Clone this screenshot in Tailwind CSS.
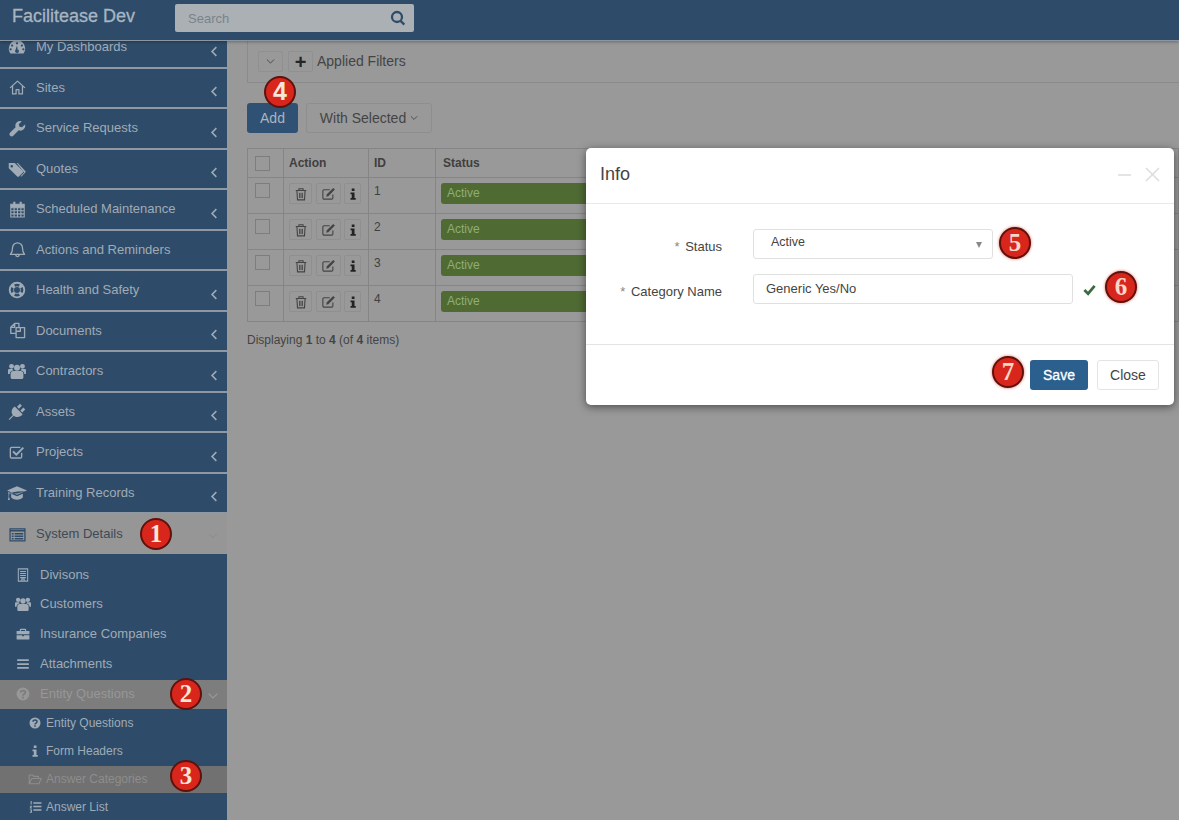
<!DOCTYPE html>
<html lang="en">
<head>
  <meta charset="UTF-8" />
  <title>Facilitease Dev</title>
  <script src="https://cdn.jsdelivr.net/npm/@tailwindcss/browser@4"></script>
</head>
<body class="relative w-[1179px] h-[820px] overflow-hidden bg-[#999999] text-[#3a3a3a] text-[13px] [font-family:'Liberation_Sans',Arial,sans-serif]">

  <!-- icons -->
  <svg class="hidden">
    <symbol id="i-gauge" viewBox="0 0 24 24"><path fill="currentColor" fill-rule="evenodd" d="M12 3a11 11 0 0 0-11 11c0 2.500.8 4.700 2.200 6.500h17.600A11 11 0 0 0 23 14 11 11 0 0 0 12 3zM12 5.500a1.500 1.500 0 1 1 0 3 1.500 1.500 0 0 1 0-3zM5.500 8.500a1.500 1.500 0 1 1 0 3 1.500 1.500 0 0 1 0-3zM18.500 8.500a1.500 1.500 0 1 1 0 3 1.500 1.500 0 0 1 0-3zM3.500 13.500a1.500 1.500 0 1 1 0 3 1.500 1.500 0 0 1 0-3zM20.500 13.500a1.500 1.500 0 1 1 0 3 1.500 1.500 0 0 1 0-3zM12 15a2.500 2.500 0 1 1-2 1l2-6 1 6z"/></symbol>
    <symbol id="i-home" viewBox="0 0 24 24"><path fill="none" stroke="currentColor" stroke-width="1.800" stroke-linejoin="round" d="M1.500 12.500 12 3l10.500 9.500M5 10v11h5v-6h4v6h5V10"/></symbol>
    <symbol id="i-wrench" viewBox="0 0 24 24"><path fill="currentColor" d="M22.600 6.300l-4.200 4.100-3.600-1-1-3.500L18 1.700a6.800 6.800 0 0 0-8.700 8.500L1.700 17.800a3 3 0 0 0 4.300 4.400l7.700-7.600a6.800 6.800 0 0 0 8.900-8.300z"/></symbol>
    <symbol id="i-tags" viewBox="0 0 24 24"><path fill="currentColor" fill-rule="evenodd" d="M1 4h8l11 10.500a1.500 1.500 0 0 1 0 2.200L14.500 22a1.500 1.500 0 0 1-2.200 0L1 11zM5 6.500a1.700 1.700 0 1 0 0 3.400 1.700 1.700 0 0 0 0-3.400z"/><path fill="currentColor" d="M11.500 4h1.500l10 10.500a1.500 1.500 0 0 1 0 2.200L18 22l-1.500-.2 5-5.200z"/></symbol>
    <symbol id="i-calendar" viewBox="0 0 24 24"><path fill="none" stroke="currentColor" stroke-width="1.500" d="M2.500 4.500h19v18h-19zM2.500 9.500h19M7.200 9.500v13M12 9.500v13M16.800 9.500v13M2.500 13.800h19M2.500 18.200h19"/><path fill="currentColor" d="M6 1h3v6H6zM15 1h3v6h-3zM2.500 4.500h19v5h-19z"/></symbol>
    <symbol id="i-bell" viewBox="0 0 24 24"><path fill="none" stroke="currentColor" stroke-width="1.800" stroke-linejoin="round" d="M12 2.500a7 7 0 0 0-7 7c0 5-1 7.500-3 9.500h20c-2-2-3-4.500-3-9.500a7 7 0 0 0-7-7zM9.500 19.500a2.500 2.500 0 0 0 5 0"/></symbol>
    <symbol id="i-lifering" viewBox="0 0 24 24"><path fill="currentColor" fill-rule="evenodd" d="M12 1a11 11 0 1 0 0 22 11 11 0 0 0 0-22zM12 3.500c1.400 0 2.700.3 3.900 1l-1.600 3a5 5 0 0 0-4.600 0l-1.600-3a8.500 8.500 0 0 1 3.900-1zM12 8a4 4 0 1 1 0 8 4 4 0 0 1 0-8zM4.500 8.100l3 1.600a5 5 0 0 0 0 4.600l-3 1.600a8.500 8.500 0 0 1 0-7.800zM19.500 8.100a8.500 8.500 0 0 1 0 7.800l-3-1.600a5 5 0 0 0 0-4.600zM9.700 16.500a5 5 0 0 0 4.600 0l1.600 3a8.500 8.500 0 0 1-7.800 0z"/></symbol>
    <symbol id="i-files" viewBox="0 0 24 24"><path fill="none" stroke="currentColor" stroke-width="1.900" stroke-linejoin="round" d="M9 16H2.500V7.500L8 2h6v5M8 2v5.500H2.500M10 8h6.500L22 8v14H10zM16 8v5h-5"/></symbol>
    <symbol id="i-users" viewBox="0 0 24 24"><path fill="currentColor" d="M12 3.500a4 4 0 1 1 0 8 4 4 0 0 1 0-8zM4.700 2.500a3.300 3.300 0 1 1 0 6.600 3.300 3.300 0 0 1 0-6.600zM19.300 2.500a3.300 3.300 0 1 1 0 6.600 3.300 3.300 0 0 1 0-6.600zM7 12h10c2 0 3.500 1.500 3.500 4v4.500c0 1.200-1 2-2.200 2H5.700c-1.200 0-2.200-.8-2.200-2V16c0-2.500 1.500-4 3.500-4zM0 10c1-.5 2-.6 3-.6h3a5 5 0 0 0 1.200 2C4.500 11.500 2.500 13 2.300 16H0zM24 10c-1-.5-2-.6-3-.6h-3a5 5 0 0 1-1.200 2c2.700.1 4.700 1.600 4.900 4.600H24z"/></symbol>
    <symbol id="i-plug" viewBox="0 0 24 24"><path fill="currentColor" d="M9 4.500 19.500 15C17 19 11 20 7.500 17L2 22.500 1 21.500 6.500 16C3.500 12.500 5 7 9 4.500zM12 5l4-4 2.500 2.500-4 4zM16.500 10l4-4L23 8.500l-4 4z"/></symbol>
    <symbol id="i-check" viewBox="0 0 24 24"><path fill="none" stroke="currentColor" stroke-width="2" stroke-linejoin="round" d="M19 13v6a2 2 0 0 1-2 2H4a2 2 0 0 1-2-2V7a2 2 0 0 1 2-2h13"/><path fill="none" stroke="currentColor" stroke-width="3" d="M6 11l5 5L21.500 5.500"/></symbol>
    <symbol id="i-cap" viewBox="0 0 24 24"><path fill="currentColor" d="M12 4 0 9l12 5 9.500-4-9 2.500-9.800-.5 9.800-1.700L22 10l2-1zM5 13v4.500c2 2 4.500 2.500 7 2.500s5-.5 7-2.500V13l-7 3zM1.500 10.500l.5 6-1 4h2.500l-1-4 .3-5.500z"/></symbol>
    <symbol id="i-listalt" viewBox="0 0 24 24"><path fill="none" stroke="currentColor" stroke-width="1.800" d="M1.500 4h21v17h-21zM1.500 6.700h21"/><path fill="currentColor" d="M4 10h2.500v2H4zM4 13.500h2.500v2H4zM4 17h2.500v2H4zM8 10h12v2H8zM8 13.500h12v2H8zM8 17h12v2H8z"/></symbol>
    <symbol id="i-building" viewBox="0 0 24 24"><path fill="none" stroke="currentColor" stroke-width="1.800" d="M4 1.500h16v21H4zM7 6h10M7 9.500h10M7 13h10M7 16.500h10M10 22.500V19h4v3.500"/></symbol>
    <symbol id="i-briefcase" viewBox="0 0 24 24"><path fill="currentColor" d="M8 3h8a1.500 1.500 0 0 1 1.500 1.500V7H23v5.500H1V7h5.500V4.500A1.500 1.500 0 0 1 8 3zM8.500 5v2h7V5zM1 14h9.500v2h3v-2H23v6a1.500 1.500 0 0 1-1.500 1.500h-19A1.500 1.500 0 0 1 1 20z"/></symbol>
    <symbol id="i-bars" viewBox="0 0 24 24"><path fill="currentColor" d="M2 4h20v3H2zM2 10.500h20v3H2zM2 17h20v3H2z"/></symbol>
    <symbol id="i-question" viewBox="0 0 24 24"><circle cx="12" cy="12" r="11" fill="currentColor"/><path fill="none" stroke="var(--hole)" stroke-width="3" d="M8 9.500C8 7 10 6 12 6s4 1 4 3.300c0 3-4 2.700-4 5.700"/><path fill="var(--hole)" d="M10.500 16.500h3v3h-3z"/></symbol>
    <symbol id="i-info" viewBox="0 0 24 24"><path fill="currentColor" d="M9.500 1h5.500v5H9.500zM7 9h8v11h2.500v3.500h-10.500V20h2.500v-7.500H7z"/></symbol>
    <symbol id="i-folder" viewBox="0 0 24 24"><path fill="none" stroke="currentColor" stroke-width="1.800" stroke-linejoin="round" d="M2 20V5h6l2 2.500h8V11M2 20l4.500-9H23l-4.500 9z"/></symbol>
    <symbol id="i-listol" viewBox="0 0 24 24"><path fill="currentColor" d="M8 4h15v3H8zM8 10.500h15v3H8zM8 17h15v3H8zM3 2h2v6.500H3zM1.500 10.500h4v1.500l-2 2h2v1.500h-4V14l2-2h-2zM1.500 17.500h4v6h-4V22h2.200v-.8h-1.400v-1.400h1.400V19H1.500z"/></symbol>
    <symbol id="i-trash" viewBox="0 0 24 24"><path fill="none" stroke="currentColor" stroke-width="1.900" d="M3 6h18M8.500 6V3h7v3M5 6l1 16h12l1-16"/><path fill="none" stroke="currentColor" stroke-width="1.500" d="M9.500 10v9M12 10v9M14.500 10v9"/></symbol>
    <symbol id="i-edit" viewBox="0 0 24 24"><path fill="none" stroke="currentColor" stroke-width="1.800" stroke-linejoin="round" d="M19 13.500V19a2 2 0 0 1-2 2H5a2 2 0 0 1-2-2V8a2 2 0 0 1 2-2h9"/><path fill="currentColor" d="M9 13.500 19.500 3l2.700 2.700L11.700 16.200 8.500 17z"/></symbol>
    <symbol id="i-search" viewBox="0 0 24 24"><path fill="none" stroke="currentColor" stroke-width="3.400" d="M10.500 3a7.500 7.500 0 1 0 0 15 7.500 7.500 0 0 0 0-15zM15.500 16l6 6"/></symbol>
    <symbol id="i-left" viewBox="0 0 10 14"><path fill="none" stroke="currentColor" stroke-width="2" d="M8 1.500 2.500 7 8 12.500"/></symbol>
    <symbol id="i-down" viewBox="0 0 14 10"><path fill="none" stroke="currentColor" stroke-width="1.500" d="M1.500 2 7 7.500 12.500 2"/></symbol>
  </svg>

  <!-- top bar -->
  <header class="relative z-10 flex items-start h-[41px] bg-[#2e4c69] border-b border-[#8a97a3] shadow-[0_1px_3px_rgba(0,0,0,0.3)]">
    <div class="w-[175px] pl-3 pt-[3px] text-[18px] leading-[26px] text-[#a9b5c0] [-webkit-text-stroke:0.3px_#a9b5c0]">Facilitease Dev</div>
    <div class="flex items-center justify-between w-[239px] h-[28px] mt-1 px-[13px] pr-2 rounded-[2px] bg-[#abb0b5] text-[#7a838b]">
      <span class="pt-px">Search</span>
      <svg class="size-[16px] text-[#2f4c68]"><use href="#i-search"/></svg>
    </div>
  </header>

  <div class="flex h-[779px]">
    <!-- sidebar -->
    <aside class="w-[227px] shrink-0 h-full overflow-hidden bg-[#8e99a4] text-[13px] leading-[12px] text-[#a0abb6]">
      <div class="-mt-[13px]">
        <a class="flex items-center h-[38.5px] mb-[2px] pl-[8px] pr-[9px] bg-[#2e4c69]"><svg class="size-[18px] mr-[10px]"><use href="#i-gauge"/></svg>My Dashboards<svg class="ml-auto mt-2 w-[8px] h-[11px]"><use href="#i-left"/></svg></a>
        <a class="flex items-center h-[38.5px] mb-[2px] pl-[9px] pr-[9px] bg-[#2e4c69]"><svg class="size-[17px] mr-[10px]"><use href="#i-home"/></svg>Sites<svg class="ml-auto mt-2 w-[8px] h-[11px]"><use href="#i-left"/></svg></a>
        <a class="flex items-center h-[38.5px] mb-[2px] pl-[9px] pr-[9px] bg-[#2e4c69]"><svg class="size-[17px] mr-[10px]"><use href="#i-wrench"/></svg>Service Requests<svg class="ml-auto mt-2 w-[8px] h-[11px]"><use href="#i-left"/></svg></a>
        <a class="flex items-center h-[38.5px] mb-[2px] pl-[8px] pr-[9px] bg-[#2e4c69]"><svg class="size-[18px] mr-[10px]"><use href="#i-tags"/></svg>Quotes<svg class="ml-auto mt-2 w-[8px] h-[11px]"><use href="#i-left"/></svg></a>
        <a class="flex items-center h-[38.5px] mb-[2px] pl-[9px] pr-[9px] bg-[#2e4c69]"><svg class="size-[17px] mr-[10px]"><use href="#i-calendar"/></svg>Scheduled Maintenance<svg class="ml-auto mt-2 w-[8px] h-[11px]"><use href="#i-left"/></svg></a>
        <a class="flex items-center h-[38.5px] mb-[2px] pl-[9px] pr-[9px] bg-[#2e4c69]"><svg class="size-[17px] mr-[10px]"><use href="#i-bell"/></svg>Actions and Reminders</a>
        <a class="flex items-center h-[38.5px] mb-[2px] pl-[8px] pr-[9px] bg-[#2e4c69]"><svg class="size-[18px] mr-[10px]"><use href="#i-lifering"/></svg>Health and Safety<svg class="ml-auto mt-2 w-[8px] h-[11px]"><use href="#i-left"/></svg></a>
        <a class="flex items-center h-[38.5px] mb-[2px] pl-[9px] pr-[9px] bg-[#2e4c69]"><svg class="size-[17px] mr-[10px]"><use href="#i-files"/></svg>Documents<svg class="ml-auto mt-2 w-[8px] h-[11px]"><use href="#i-left"/></svg></a>
        <a class="flex items-center h-[38.5px] mb-[2px] pl-[8px] pr-[9px] bg-[#2e4c69]"><svg class="size-[18px] mr-[10px]"><use href="#i-users"/></svg>Contractors<svg class="ml-auto mt-2 w-[8px] h-[11px]"><use href="#i-left"/></svg></a>
        <a class="flex items-center h-[38.5px] mb-[2px] pl-[8px] pr-[9px] bg-[#2e4c69]"><svg class="size-[18px] mr-[10px]"><use href="#i-plug"/></svg>Assets<svg class="ml-auto mt-2 w-[8px] h-[11px]"><use href="#i-left"/></svg></a>
        <a class="flex items-center h-[38.5px] mb-[2px] pl-[9px] pr-[9px] bg-[#2e4c69]"><svg class="size-[16px] mr-[11px]"><use href="#i-check"/></svg>Projects<svg class="ml-auto mt-2 w-[8px] h-[11px]"><use href="#i-left"/></svg></a>
        <a class="flex items-center h-[38.5px] mb-[2px] pl-[7px] pr-[9px] bg-[#2e4c69]"><svg class="size-[20px] mr-[9px]"><use href="#i-cap"/></svg>Training Records<svg class="ml-auto mt-2 w-[8px] h-[11px]"><use href="#i-left"/></svg></a>
        <a class="flex items-center h-[40px] pl-[9px] pr-[9px] bg-[#969696] text-[#3e4a57]"><svg class="size-[17px] mr-[10px] text-[#2e4c69]"><use href="#i-listalt"/></svg>System Details<svg class="ml-auto mt-1 w-[10px] h-[8px] text-[#8e8e8e]"><use href="#i-down"/></svg></a>

        <div class="pt-[6px] pb-8 bg-[#2e4c69]">
          <a class="flex items-center h-[29.6px] pl-[16px]"><svg class="size-[14px] mr-[10px]"><use href="#i-building"/></svg>Divisons</a>
          <a class="flex items-center h-[29.6px] pl-[15px]"><svg class="size-[16px] mr-[9px]"><use href="#i-users"/></svg>Customers</a>
          <a class="flex items-center h-[29.6px] pl-[16px]"><svg class="size-[14px] mr-[10px]"><use href="#i-briefcase"/></svg>Insurance Companies</a>
          <a class="flex items-center h-[29.6px] pl-[16px]"><svg class="size-[14px] mr-[10px]"><use href="#i-bars"/></svg>Attachments</a>
          <a class="flex items-center h-[29px] mt-[1.200px] pl-[16px] pr-[8px] bg-[#7d7d7d] text-[#979797] [--hole:#7d7d7d]"><svg class="size-[14px] mr-[10px]"><use href="#i-question"/></svg>Entity Questions<svg class="ml-auto mt-1 w-[12px] h-[8px] text-[#999999]"><use href="#i-down"/></svg></a>
          <div class="text-[12px]">
            <a class="flex items-center h-[28px] pl-[29px] [--hole:#2e4c69]"><svg class="size-[12px] mr-[5px]"><use href="#i-question"/></svg>Entity Questions</a>
            <a class="flex items-center h-[28px] pl-[29px]"><svg class="size-[12px] mr-[5px]"><use href="#i-info"/></svg>Form Headers</a>
            <a class="flex items-center h-[27px] mt-[1px] pl-[28px] bg-[#717171] text-[#8d8d8d]"><svg class="size-[14px] mr-[4px]"><use href="#i-folder"/></svg>Answer Categories</a>
            <a class="flex items-center h-[28px] pl-[29px]"><svg class="size-[13px] mr-[4px]"><use href="#i-listol"/></svg>Answer List</a>
          </div>
        </div>
      </div>
    </aside>

    <!-- main content -->
    <main class="flex-1 min-w-0 pl-5">
      <div class="flex items-center h-[42px] pl-[10px] gap-[5px] border-l border-b border-[#8b8b8b]">
        <button class="flex items-center justify-center w-[25px] h-[21px] rounded-[2px] border border-[#909090] text-[#4a4a4a]"><svg class="w-[9px] h-[7px]"><use href="#i-down"/></svg></button>
        <button class="flex items-center justify-center w-[25px] h-[21px] rounded-[2px] border border-[#909090] text-[#262626] text-[20px] font-bold leading-none">+</button>
        <span class="ml-[-1px] text-[14px] text-[#444444]">Applied Filters</span>
      </div>

      <div class="flex gap-2 mt-[20px]">
        <button class="w-[51px] h-[30px] rounded-[3px] bg-[#2f5173] text-[14px] text-[#a9b5c1]">Add</button>
        <button class="flex items-center justify-center gap-1 w-[126px] h-[30px] rounded-[3px] border border-[#8e8e8e] text-[14px] text-[#444444]">With Selected<svg class="w-[8px] h-[6px]"><use href="#i-down"/></svg></button>
      </div>

      <table class="w-full mt-[15px] table-fixed border-collapse text-[12px] text-[#3f3f3f]">
        <colgroup><col class="w-[36px]" /><col class="w-[85px]" /><col class="w-[67px]" /><col class="w-[400px]" /><col /></colgroup>
        <thead>
          <tr class="h-[29px] font-bold text-left">
            <th class="border border-[#858585] align-middle pl-[7px]"><span class="block size-[15px] border border-[#7d7d7d]"></span></th>
            <th class="border border-[#858585] pl-[5px]">Action</th>
            <th class="border border-[#858585] pl-[5px]">ID</th>
            <th class="border border-[#858585] pl-[7px]">Status</th>
            <th class="border border-[#858585]"></th>
          </tr>
        </thead>
        <tbody>
          <tr class="h-[36px]">
            <td class="border border-[#858585] align-top pl-[7px] pt-[5px]"><span class="block size-[15px] border border-[#7d7d7d]"></span></td>
            <td class="border border-[#858585] align-top pl-[5px] pt-[5px]"><div class="flex gap-[3.500px]">
              <span class="flex items-center justify-center w-[23px] h-[21px] rounded-[2px] border border-[#8f8f8f] text-[#444444]"><svg class="size-[14px]"><use href="#i-trash"/></svg></span>
              <span class="flex items-center justify-center w-[25px] h-[21px] rounded-[2px] border border-[#8f8f8f] text-[#444444]"><svg class="size-[15px]"><use href="#i-edit"/></svg></span>
              <span class="flex items-center justify-center w-[17px] h-[21px] rounded-[2px] border border-[#8f8f8f]"><svg class="size-[12px] text-[#222222]"><use href="#i-info"/></svg></span>
            </div></td>
            <td class="border border-[#858585] align-top pl-[5px] pt-[4px]">1</td>
            <td class="border border-[#858585] align-top pl-[5px] pt-[5px]"><div class="flex items-center h-[21px] pl-[6px] pb-[2px] rounded-[3px] bg-[#4f6b33] text-[#8fae72]">Active</div></td>
            <td class="border border-[#858585]"></td>
          </tr>
          <tr class="h-[36px]">
            <td class="border border-[#858585] align-top pl-[7px] pt-[5px]"><span class="block size-[15px] border border-[#7d7d7d]"></span></td>
            <td class="border border-[#858585] align-top pl-[5px] pt-[5px]"><div class="flex gap-[3.500px]">
              <span class="flex items-center justify-center w-[23px] h-[21px] rounded-[2px] border border-[#8f8f8f] text-[#444444]"><svg class="size-[14px]"><use href="#i-trash"/></svg></span>
              <span class="flex items-center justify-center w-[25px] h-[21px] rounded-[2px] border border-[#8f8f8f] text-[#444444]"><svg class="size-[15px]"><use href="#i-edit"/></svg></span>
              <span class="flex items-center justify-center w-[17px] h-[21px] rounded-[2px] border border-[#8f8f8f]"><svg class="size-[12px] text-[#222222]"><use href="#i-info"/></svg></span>
            </div></td>
            <td class="border border-[#858585] align-top pl-[5px] pt-[4px]">2</td>
            <td class="border border-[#858585] align-top pl-[5px] pt-[5px]"><div class="flex items-center h-[21px] pl-[6px] pb-[2px] rounded-[3px] bg-[#4f6b33] text-[#8fae72]">Active</div></td>
            <td class="border border-[#858585]"></td>
          </tr>
          <tr class="h-[36px]">
            <td class="border border-[#858585] align-top pl-[7px] pt-[5px]"><span class="block size-[15px] border border-[#7d7d7d]"></span></td>
            <td class="border border-[#858585] align-top pl-[5px] pt-[5px]"><div class="flex gap-[3.500px]">
              <span class="flex items-center justify-center w-[23px] h-[21px] rounded-[2px] border border-[#8f8f8f] text-[#444444]"><svg class="size-[14px]"><use href="#i-trash"/></svg></span>
              <span class="flex items-center justify-center w-[25px] h-[21px] rounded-[2px] border border-[#8f8f8f] text-[#444444]"><svg class="size-[15px]"><use href="#i-edit"/></svg></span>
              <span class="flex items-center justify-center w-[17px] h-[21px] rounded-[2px] border border-[#8f8f8f]"><svg class="size-[12px] text-[#222222]"><use href="#i-info"/></svg></span>
            </div></td>
            <td class="border border-[#858585] align-top pl-[5px] pt-[4px]">3</td>
            <td class="border border-[#858585] align-top pl-[5px] pt-[5px]"><div class="flex items-center h-[21px] pl-[6px] pb-[2px] rounded-[3px] bg-[#4f6b33] text-[#8fae72]">Active</div></td>
            <td class="border border-[#858585]"></td>
          </tr>
          <tr class="h-[36px]">
            <td class="border border-[#858585] align-top pl-[7px] pt-[5px]"><span class="block size-[15px] border border-[#7d7d7d]"></span></td>
            <td class="border border-[#858585] align-top pl-[5px] pt-[5px]"><div class="flex gap-[3.500px]">
              <span class="flex items-center justify-center w-[23px] h-[21px] rounded-[2px] border border-[#8f8f8f] text-[#444444]"><svg class="size-[14px]"><use href="#i-trash"/></svg></span>
              <span class="flex items-center justify-center w-[25px] h-[21px] rounded-[2px] border border-[#8f8f8f] text-[#444444]"><svg class="size-[15px]"><use href="#i-edit"/></svg></span>
              <span class="flex items-center justify-center w-[17px] h-[21px] rounded-[2px] border border-[#8f8f8f]"><svg class="size-[12px] text-[#222222]"><use href="#i-info"/></svg></span>
            </div></td>
            <td class="border border-[#858585] align-top pl-[5px] pt-[4px]">4</td>
            <td class="border border-[#858585] align-top pl-[5px] pt-[5px]"><div class="flex items-center h-[21px] pl-[6px] pb-[2px] rounded-[3px] bg-[#4f6b33] text-[#8fae72]">Active</div></td>
            <td class="border border-[#858585]"></td>
          </tr>
        </tbody>
      </table>

      <p class="mt-[9px] text-[12px] text-[#444444]">Displaying <b>1</b> to <b>4</b> (of <b>4</b> items)</p>
    </main>
  </div>

  <!-- modal -->
  <section class="absolute z-20 left-[586px] top-[148px] w-[588px] h-[257px] flex flex-col rounded-[5px] bg-white text-[#444444] shadow-[0_2px_8px_rgba(0,0,0,0.5)]">
    <div class="flex items-center justify-between h-[56px] pl-[14px] pr-[14px] pb-[2px] border-b border-[#e8e8e8]">
      <h2 class="text-[18px] text-[#444444]">Info</h2>
      <div class="flex items-center gap-[14px] text-[#dddddd]">
        <span class="block w-[13px] h-[2px] bg-[#e4e4e4]"></span>
        <svg class="size-[15px]" viewBox="0 0 15 15"><path fill="none" stroke="currentColor" stroke-width="1.500" d="M1 1l13 13M14 1 1 14"/></svg>
      </div>
    </div>

    <div class="flex-1 pt-[25px]">
      <div class="flex items-center h-[30px]">
        <label class="w-[136px] text-right text-[13px] pt-[6px]"><span class="text-[#888888] pr-[2px]">*</span> Status</label>
        <div class="flex items-center justify-between ml-[31px] w-[240px] h-[30px] pl-[17px] pr-[10px] rounded-[3px] border border-[#e0e0e0] text-[12.500px]">
          <span class="-mt-[3px]">Active</span>
          <span class="mt-[2px] border-x-[3.500px] border-x-transparent border-t-[6px] border-t-[#888888]"></span>
        </div>
      </div>
      <div class="flex items-center h-[30px] mt-[15px]">
        <label class="w-[136px] text-right text-[13px] pt-[5px]"><span class="text-[#888888] pr-[2px]">*</span> Category Name</label>
        <div class="flex items-center ml-[31px] w-[320px] h-[30px] pl-[12px] rounded-[3px] border border-[#e0e0e0] text-[13px]">Generic Yes/No</div>
        <svg class="size-[13px] ml-[10px] text-[#3c6b3f]" viewBox="0 0 14 14"><path fill="none" stroke="currentColor" stroke-width="3" d="M1.500 7.500 5.500 11.500 12.500 3"/></svg>
      </div>
    </div>

    <div class="flex items-center justify-end gap-[9px] h-[61px] pr-[15px] border-t border-[#e4e4e4]">
      <button class="w-[58px] h-[30px] rounded-[3px] bg-[#2a5f8e] text-[14px] text-white [-webkit-text-stroke:0.3px_white]">Save</button>
      <button class="w-[62px] h-[30px] rounded-[3px] border border-[#e4e4e4] text-[14px] text-[#444444]">Close</button>
    </div>
  </section>

  <!-- numbered callouts -->
  <span class="absolute z-30 left-[140px] top-[518px] flex items-center justify-center size-[32px] rounded-full border-2 border-[#5e120c] bg-[#d9261c] text-[25px] font-bold text-[#f5e6d8] [font-family:'Liberation_Serif',serif]">1</span>
  <span class="absolute z-30 left-[170px] top-[678px] flex items-center justify-center size-[32px] rounded-full border-2 border-[#5e120c] bg-[#d9261c] text-[25px] font-bold text-[#f5e6d8] [font-family:'Liberation_Serif',serif]">2</span>
  <span class="absolute z-30 left-[170px] top-[760px] flex items-center justify-center size-[32px] rounded-full border-2 border-[#5e120c] bg-[#d9261c] text-[25px] font-bold text-[#f5e6d8] [font-family:'Liberation_Serif',serif]">3</span>
  <span class="absolute z-30 left-[264px] top-[76px] flex items-center justify-center size-[32px] rounded-full border-2 border-[#5e120c] bg-[#d9261c] text-[25px] font-bold text-[#f5e6d8]">4</span>
  <span class="absolute z-30 left-[999px] top-[227px] flex items-center justify-center size-[32px] rounded-full border-2 border-[#5e120c] bg-[#d9261c] text-[25px] font-bold text-[#f5d8c8] [font-family:'Liberation_Serif',serif] shadow-[0_0_3px_rgba(212,36,26,0.7)]">5</span>
  <span class="absolute z-30 left-[1105px] top-[271px] flex items-center justify-center size-[32px] rounded-full border-2 border-[#5e120c] bg-[#d9261c] text-[25px] font-bold text-[#f5d8c8] [font-family:'Liberation_Serif',serif] shadow-[0_0_3px_rgba(212,36,26,0.7)]">6</span>
  <span class="absolute z-30 left-[992px] top-[356px] flex items-center justify-center size-[32px] rounded-full border-2 border-[#5e120c] bg-[#d9261c] text-[25px] font-bold text-[#f5d8c8] [font-family:'Liberation_Serif',serif] shadow-[0_0_3px_rgba(212,36,26,0.7)]">7</span>
</body>
</html>
